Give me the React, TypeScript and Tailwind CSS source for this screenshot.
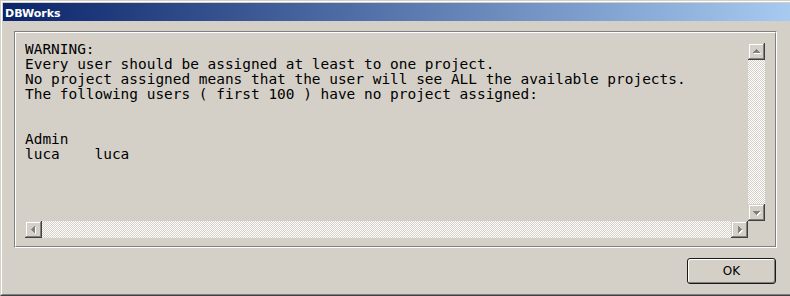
import type { ReactNode } from "react";

type Dir = "up" | "down" | "left" | "right";

function Arrow({ dir }: { dir: Dir }) {
  const cells: [number, number, number, number][] = [];
  for (let i = 0; i < 4; i++) {
    if (dir === "up") cells.push([8 - i, 6 + i, 2 * i + 1, 1]);
    if (dir === "down") cells.push([8 - i, 10 - i, 2 * i + 1, 1]);
    if (dir === "left") cells.push([6 + i, 8 - i, 1, 2 * i + 1]);
    if (dir === "right") cells.push([10 - i, 8 - i, 1, 2 * i + 1]);
  }
  return (
    <svg width="17" height="17" viewBox="0 0 17 17" shapeRendering="crispEdges">
      {cells.map(([x, y, w, h], i) => (
        <rect key={"s" + i} x={x + 1} y={y + 1} width={w} height={h} fill="#ffffff" />
      ))}
      {cells.map(([x, y, w, h], i) => (
        <rect key={"a" + i} x={x} y={y} width={w} height={h} fill="#808080" />
      ))}
    </svg>
  );
}

function ScrollButton({ dir }: { dir: Dir }) {
  return (
    <div className="w-[17px] h-[17px] shrink-0 bg-[#d4d0c8] shadow-[inset_-1px_-1px_0_#404040,inset_1px_1px_0_#d4d0c8,inset_-2px_-2px_0_#808080,inset_2px_2px_0_#ffffff]">
      <Arrow dir={dir} />
    </div>
  );
}

function Track({ children }: { children?: ReactNode }) {
  return (
    <div className="flex-1 bg-[conic-gradient(#ffffff_25%,#d4d0c8_0_50%,#ffffff_0_75%,#d4d0c8_0)] bg-[length:2px_2px]">
      {children}
    </div>
  );
}

const lines = [
  "WARNING:",
  "Every user should be assigned at least to one project.",
  "No project assigned means that the user will see ALL the available projects.",
  "The following users ( first 100 ) have no project assigned:",
  "",
  "",
  "Admin",
  "luca    luca",
];

export default function App() {
  return (
    <div className="w-[790px] h-[296px] bg-[#d4d0c8] border-t border-l border-b border-t-[#d4d0c8] border-l-[#d4d0c8] border-b-[#404040]">
      <div className="h-full border-t border-l border-b border-t-white border-l-white border-b-[#808080] pt-[1px] pl-[1px] flex flex-col">
        {/* title bar */}
        <div className="h-[18px] w-full overflow-hidden bg-[linear-gradient(to_right,#0a246a,#a6caf0)] pl-[2px]">
          <span className="block text-white font-bold text-[11px] leading-[21px] font-['DejaVu_Sans',sans-serif]">
            DBWorks
          </span>
        </div>

        <div className="pl-[11px] pt-[10px]">
          {/* etched group */}
          <div className="w-[763px] h-[217px] border border-t-[#808080] border-l-[#808080] border-r-white border-b-white">
            <div className="h-full border border-t-white border-l-white border-r-[#808080] border-b-[#808080] pl-[9px] pt-[10px]">
              <div className="w-[740px] h-[195px] grid grid-cols-[723px_17px] grid-rows-[178px_17px]">
                <div className="overflow-hidden">
                  <pre className="-mt-[1px] m-0 whitespace-pre text-black text-[14.45px] leading-[15px] font-['DejaVu_Sans_Mono',monospace]">
                    {lines.join("\n")}
                  </pre>
                </div>
                <div className="flex flex-col">
                  <ScrollButton dir="up" />
                  <Track />
                  <ScrollButton dir="down" />
                </div>
                <div className="flex">
                  <ScrollButton dir="left" />
                  <Track />
                  <ScrollButton dir="right" />
                </div>
                <div />
              </div>
            </div>
          </div>

          <div className="w-[763px] flex justify-end pr-[1px] mt-[10px]">
            <button className="w-[89px] h-[26px] bg-[#d4d0c8] border border-[#1a1a1a] rounded-[3px] shadow-[inset_1px_1px_0_#ffffff,inset_-1px_-1px_0_#808080] text-black text-[12px] font-['DejaVu_Sans',sans-serif] flex items-center justify-center">
              OK
            </button>
          </div>
        </div>
      </div>
    </div>
  );
}
